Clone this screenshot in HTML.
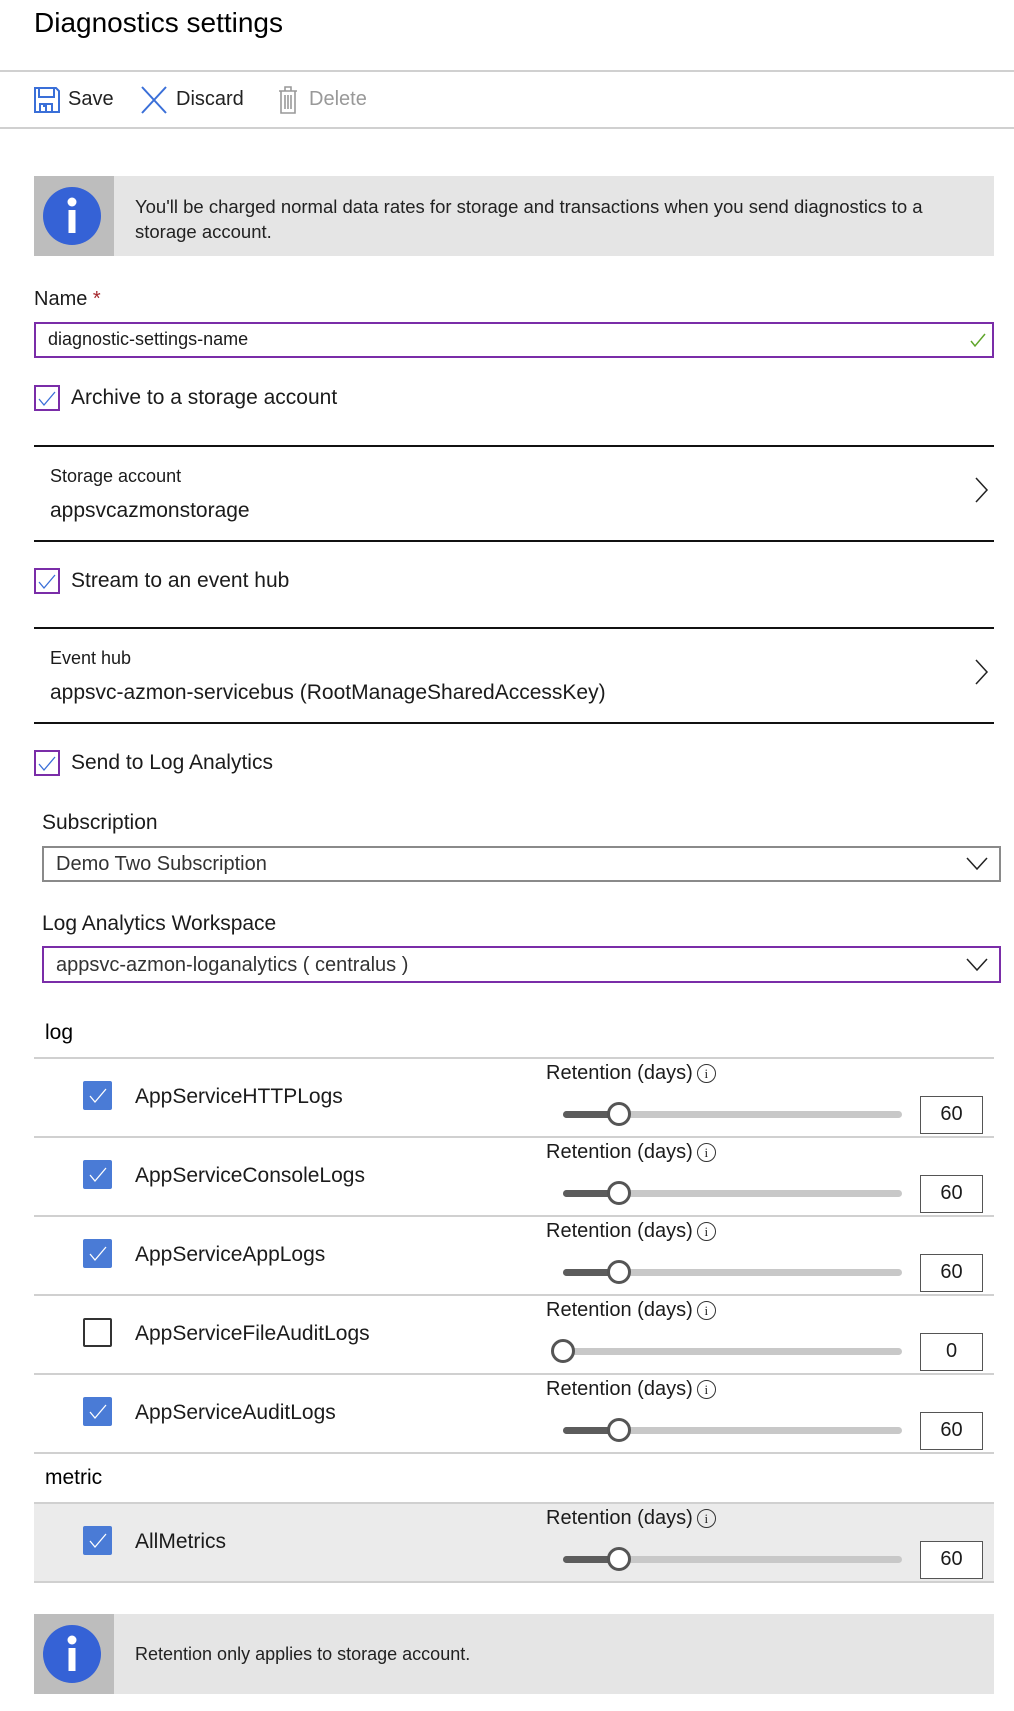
<!DOCTYPE html>
<html><head><meta charset="utf-8"><style>
*{margin:0;padding:0;box-sizing:border-box}
body{width:1014px;height:1711px;background:#fff;position:relative;overflow:hidden;font-family:"Liberation Sans",sans-serif;color:#1b1b1b}
.a{position:absolute;white-space:nowrap}
.hl{position:absolute;left:34px;width:960px;height:2px;background:#d0d0d0}
.dl{position:absolute;left:34px;width:960px;height:2px;background:#111}
.info{position:absolute;left:34px;width:960px;height:80px;background:#e5e5e5}
.info .ic{position:absolute;left:0;top:0;width:80px;height:100%;background:#bdbdbd}
.cb{position:absolute;left:34px;width:26px;height:26px;border:2px solid #7a2da8}
.lbl{font-size:21px}
.cbb{position:absolute;left:83px;width:29px;height:29px;background:#4a7bd6;border-radius:2px}
.cbe{position:absolute;left:83px;width:29px;height:29px;border:2px solid #333;border-radius:2px}
.trk{position:absolute;left:563px;width:339px;height:7px;background:#c8c8c8;border-radius:4px}
.fill{position:absolute;left:563px;height:7px;background:#5c5c5c;border-radius:4px}
.th{position:absolute;width:24px;height:24px;border:3px solid #555;border-radius:50%;background:#fff}
.nb{position:absolute;left:920px;width:63px;height:38px;border:1.5px solid #555;font-size:20px;text-align:center;line-height:35px}
.ret{position:absolute;left:546px;font-size:20px}
.ii{display:inline-block;width:19px;height:19px;border:1.3px solid #333;border-radius:50%;font-size:13px;text-align:center;line-height:17px;vertical-align:1px;margin-left:4px;font-family:"Liberation Serif",serif}
</style></head><body>
<div class="a" style="left:34px;top:7px;font-size:28px;color:#000">Diagnostics settings</div>
<div class="a" style="left:0;top:70px;width:1014px;height:2px;background:#d0d0d0"></div>
<svg class="a" style="left:34px;top:87px" width="26" height="26" viewBox="0 0 26 26" fill="none" stroke="#3a6fd8" stroke-width="2"><path d="M1 1h21l3 3v21H1z"/><path d="M5 1v9h15V1"/><path d="M6 25v-8h12v8"/><path d="M9 19h3v6"/></svg>
<div class="a" style="left:68px;top:88px;font-size:20px;color:#222">Save</div>
<svg class="a" style="left:140px;top:86px" width="28" height="28" viewBox="0 0 28 28" stroke="#3a6fd8" stroke-width="2"><path d="M2 1l24 26M26 1L2 27"/></svg>
<div class="a" style="left:176px;top:88px;font-size:20px;color:#222">Discard</div>
<svg class="a" style="left:278px;top:86px" width="20" height="28" viewBox="0 0 20 28" fill="none" stroke="#999" stroke-width="1.6"><path d="M1 5h18M7 5V1h6v4M3 5v22h14V5M7 9v14M10 9v14M13 9v14"/></svg>
<div class="a" style="left:309px;top:88px;font-size:20px;color:#999">Delete</div>
<div class="a" style="left:0;top:127px;width:1014px;height:2px;background:#d0d0d0"></div>

<div class="info" style="top:176px"><div class="ic"></div>
<svg class="a" style="left:9px;top:11px" width="58" height="58"><circle cx="29" cy="29" r="29" fill="#3562d6"/><circle cx="29" cy="15" r="4.5" fill="#fff"/><rect x="25.5" y="23" width="7" height="23" fill="#fff"/></svg>
<div class="a" style="left:101px;top:18px;font-size:18.5px;line-height:25px;color:#222">You'll be charged normal data rates for storage and transactions when you send diagnostics to a<br>storage account.</div></div>

<div class="a" style="left:34px;top:288px;font-size:20px">Name <span style="color:#a4262c">*</span></div>
<div class="a" style="left:34px;top:322px;width:960px;height:36px;border:2px solid #7a2da8"></div>
<div class="a" style="left:48px;top:329px;font-size:18px">diagnostic-settings-name</div>
<svg class="a" style="left:970px;top:332px" width="16" height="16" viewBox="0 0 16 16" fill="none" stroke="#5fa52a" stroke-width="1.5"><path d="M1 9l4 5L15 2"/></svg>

<div class="cb" style="top:385px"></div><svg class="a" style="left:38px;top:391px" width="18" height="16" fill="none" stroke="#3a6fd8" stroke-width="1.3"><path d="M1 8l5 6L17 1"/></svg>
<div class="a lbl" style="left:71px;top:386px">Archive to a storage account</div>
<div class="dl" style="top:445px"></div>
<div class="a" style="left:50px;top:466px;font-size:18px">Storage account</div>
<div class="a" style="left:50px;top:499px;font-size:21px">appsvcazmonstorage</div>
<svg class="a" style="left:975px;top:477px" width="14" height="26" fill="none" stroke="#222" stroke-width="1.5"><path d="M1 1l11 12L1 25"/></svg>
<div class="dl" style="top:540px"></div>

<div class="cb" style="top:568px"></div><svg class="a" style="left:38px;top:574px" width="18" height="16" fill="none" stroke="#3a6fd8" stroke-width="1.3"><path d="M1 8l5 6L17 1"/></svg>
<div class="a lbl" style="left:71px;top:569px">Stream to an event hub</div>
<div class="dl" style="top:627px"></div>
<div class="a" style="left:50px;top:648px;font-size:18px">Event hub</div>
<div class="a" style="left:50px;top:681px;font-size:21px">appsvc-azmon-servicebus (RootManageSharedAccessKey)</div>
<svg class="a" style="left:975px;top:659px" width="14" height="26" fill="none" stroke="#222" stroke-width="1.5"><path d="M1 1l11 12L1 25"/></svg>
<div class="dl" style="top:722px"></div>

<div class="cb" style="top:750px"></div><svg class="a" style="left:38px;top:756px" width="18" height="16" fill="none" stroke="#3a6fd8" stroke-width="1.3"><path d="M1 8l5 6L17 1"/></svg>
<div class="a lbl" style="left:71px;top:751px">Send to Log Analytics</div>

<div class="a" style="left:42px;top:811px;font-size:21px">Subscription</div>
<div class="a" style="left:42px;top:846px;width:959px;height:36px;border:2px solid #8a8a8a"></div>
<div class="a" style="left:56px;top:853px;font-size:20px;color:#333">Demo Two Subscription</div>
<svg class="a" style="left:966px;top:857px" width="22" height="14" fill="none" stroke="#222" stroke-width="1.5"><path d="M1 1l10 11L21 1"/></svg>

<div class="a" style="left:42px;top:912px;font-size:21px">Log Analytics Workspace</div>
<div class="a" style="left:42px;top:946px;width:959px;height:37px;border:2px solid #7a2da8"></div>
<div class="a" style="left:56px;top:954px;font-size:20px;color:#333">appsvc-azmon-loganalytics ( centralus )</div>
<svg class="a" style="left:966px;top:958px" width="22" height="14" fill="none" stroke="#222" stroke-width="1.5"><path d="M1 1l10 11L21 1"/></svg>

<div class="a" style="left:45px;top:1021px;font-size:21px;color:#000">log</div>

<div class="hl" style="top:1057px"></div>
<div class="cbb" style="top:1081px"></div><svg class="a" style="left:89px;top:1088px" width="18" height="16" fill="none" stroke="#fff" stroke-width="1.3"><path d="M1 8l5 6L17 1"/></svg>
<div class="a lbl" style="left:135px;top:1085px">AppServiceHTTPLogs</div>
<div class="ret" style="top:1062px">Retention (days)<span class="ii">i</span></div>
<div class="trk" style="top:1111px"></div><div class="fill" style="top:1111px;width:56px"></div><div class="th" style="left:607px;top:1102px"></div>
<div class="nb" style="top:1096px">60</div>

<div class="hl" style="top:1136px"></div>
<div class="cbb" style="top:1160px"></div><svg class="a" style="left:89px;top:1167px" width="18" height="16" fill="none" stroke="#fff" stroke-width="1.3"><path d="M1 8l5 6L17 1"/></svg>
<div class="a lbl" style="left:135px;top:1164px">AppServiceConsoleLogs</div>
<div class="ret" style="top:1141px">Retention (days)<span class="ii">i</span></div>
<div class="trk" style="top:1190px"></div><div class="fill" style="top:1190px;width:56px"></div><div class="th" style="left:607px;top:1181px"></div>
<div class="nb" style="top:1175px">60</div>

<div class="hl" style="top:1215px"></div>
<div class="cbb" style="top:1239px"></div><svg class="a" style="left:89px;top:1246px" width="18" height="16" fill="none" stroke="#fff" stroke-width="1.3"><path d="M1 8l5 6L17 1"/></svg>
<div class="a lbl" style="left:135px;top:1243px">AppServiceAppLogs</div>
<div class="ret" style="top:1220px">Retention (days)<span class="ii">i</span></div>
<div class="trk" style="top:1269px"></div><div class="fill" style="top:1269px;width:56px"></div><div class="th" style="left:607px;top:1260px"></div>
<div class="nb" style="top:1254px">60</div>

<div class="hl" style="top:1294px"></div>
<div class="cbe" style="top:1318px"></div>
<div class="a lbl" style="left:135px;top:1322px">AppServiceFileAuditLogs</div>
<div class="ret" style="top:1299px">Retention (days)<span class="ii">i</span></div>
<div class="trk" style="top:1348px"></div><div class="th" style="left:551px;top:1339px"></div>
<div class="nb" style="top:1333px">0</div>

<div class="hl" style="top:1373px"></div>
<div class="cbb" style="top:1397px"></div><svg class="a" style="left:89px;top:1404px" width="18" height="16" fill="none" stroke="#fff" stroke-width="1.3"><path d="M1 8l5 6L17 1"/></svg>
<div class="a lbl" style="left:135px;top:1401px">AppServiceAuditLogs</div>
<div class="ret" style="top:1378px">Retention (days)<span class="ii">i</span></div>
<div class="trk" style="top:1427px"></div><div class="fill" style="top:1427px;width:56px"></div><div class="th" style="left:607px;top:1418px"></div>
<div class="nb" style="top:1412px">60</div>
<div class="hl" style="top:1452px"></div>

<div class="a" style="left:45px;top:1466px;font-size:21px;color:#000">metric</div>
<div class="a" style="left:34px;top:1503px;width:960px;height:79px;background:#ebebeb"></div>
<div class="hl" style="top:1502px"></div>
<div class="cbb" style="top:1526px"></div><svg class="a" style="left:89px;top:1533px" width="18" height="16" fill="none" stroke="#fff" stroke-width="1.3"><path d="M1 8l5 6L17 1"/></svg>
<div class="a lbl" style="left:135px;top:1530px">AllMetrics</div>
<div class="ret" style="top:1507px">Retention (days)<span class="ii">i</span></div>
<div class="trk" style="top:1556px"></div><div class="fill" style="top:1556px;width:56px"></div><div class="th" style="left:607px;top:1547px"></div>
<div class="nb" style="top:1541px;background:#fff">60</div>
<div class="hl" style="top:1581px"></div>

<div class="info" style="top:1614px"><div class="ic"></div>
<svg class="a" style="left:9px;top:11px" width="58" height="58"><circle cx="29" cy="29" r="29" fill="#3562d6"/><circle cx="29" cy="15" r="4.5" fill="#fff"/><rect x="25.5" y="23" width="7" height="23" fill="#fff"/></svg>
<div class="a" style="left:101px;top:30px;font-size:18px;color:#222">Retention only applies to storage account.</div></div>
</body></html>
